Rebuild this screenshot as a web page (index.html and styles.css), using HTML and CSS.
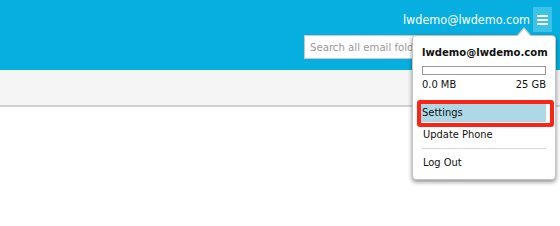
FILE: index.html
```html
<!DOCTYPE html>
<html>
<head>
<meta charset="utf-8">
<link rel="stylesheet" href="styles.css">
</head>
<body>
<header class="topbar">
  <div class="user-row">
    <span class="user-email">lwdemo@lwdemo.com</span>
    <button class="menu-btn" aria-label="Menu">
      <svg width="11" height="10" viewBox="0 0 11 10"><rect x="0" y="0" width="11" height="2" fill="#fff"/><rect x="0" y="4" width="11" height="2" fill="#fff"/><rect x="0" y="8" width="11" height="2" fill="#fff"/></svg>
    </button>
  </div>
  <div class="search-row">
    <input class="search" type="text" placeholder="Search all email folders">
  </div>
</header>
<div class="toolbar"></div>

<div class="dropdown">
  <div class="dd-email">lwdemo@lwdemo.com</div>
  <div class="quota-bar"></div>
  <div class="quota-labels"><span>0.0 MB</span><span>25 GB</span></div>
  <div class="dd-item active">Settings</div>
  <div class="dd-item">Update Phone</div>
  <div class="dd-sep"></div>
  <div class="dd-item">Log Out</div>
</div>
<div class="annotation"></div>
</body>
</html>
```
FILE: styles.css
```css
html, body {
  margin: 0;
  padding: 0;
  background: #fff;
}
body {
  width: 560px;
  height: 226px;
  overflow: hidden;
  position: relative;
  font-family: "DejaVu Sans Condensed", "DejaVu Sans", sans-serif;
  font-stretch: condensed;
}
.topbar {
  background: #06afdf;
  height: 71px;
  border-bottom: 1px solid #e6f6fb;
  box-sizing: border-box;
  padding-top: 7px;
}
.user-row {
  display: flex;
  justify-content: flex-end;
  align-items: center;
  padding-right: 8px;
  gap: 3px;
  height: 25px;
}
.user-email {
  color: #fff;
  font-size: 12.5px;
}
.menu-btn {
  width: 19px;
  height: 25px;
  border: 0;
  padding: 0;
  background: #3cc3e8;
  display: flex;
  align-items: center;
  justify-content: center;
}
.search-row {
  padding-top: 3px;
  padding-left: 304px;
}
.search {
  box-sizing: border-box;
  width: 236px;
  height: 24px;
  border: 1px solid #c8c8c8;
  padding: 0 5px;
  font-family: inherit;
  font-size: 11.3px;
  color: #333;
  outline: none;
}
.search::placeholder {
  color: #9a9a9a;
}
.toolbar {
  height: 34px;
  background: #f5f5f5;
  border-bottom: 2px solid #d2d2d2;
}
.dropdown {
  position: absolute;
  left: 412px;
  top: 35px;
  width: 144px;
  height: 145px;
  box-sizing: border-box;
  background: #fff;
  border: 1px solid #c4c4c4;
  border-radius: 4px;
  box-shadow: 0 2px 4px rgba(0,0,0,0.45);
  padding: 0 9px 0 9px;
  font-size: 11px;
  color: #111;
}
.dropdown::before {
  content: "";
  position: absolute;
  left: 103px;
  top: -9px;
  border-left: 8px solid transparent;
  border-right: 8px solid transparent;
  border-bottom: 9px solid #c4c4c4;
}
.dropdown::after {
  content: "";
  position: absolute;
  left: 104px;
  top: -7px;
  border-left: 7px solid transparent;
  border-right: 7px solid transparent;
  border-bottom: 8px solid #fff;
}
.dd-email {
  font-weight: bold;
  font-size: 11.2px;
  margin-top: 9px;
  line-height: 15px;
}
.quota-bar {
  margin-top: 6px;
  height: 9px;
  box-sizing: border-box;
  border: 1px solid #999;
  background: #fff;
}
.quota-labels {
  display: flex;
  justify-content: space-between;
  margin-top: 3px;
  line-height: 14px;
}
.dd-item {
  line-height: 19px;
  padding-left: 1px;
}
.dd-item.active {
  background: #add8e6;
  margin-top: 11px;
  margin-left: -1px;
  padding-top: 1px;
  line-height: 18px;
}
.dd-item.active + .dd-item {
  margin-top: 3px;
}
.dd-sep {
  height: 1px;
  background: #d8d8d8;
  margin: 4px 0 4px;
}
.annotation {
  position: absolute;
  left: 417px;
  top: 100px;
  width: 137px;
  height: 27px;
  box-sizing: border-box;
  border: 4px solid #fb2415;
  border-radius: 3px;
}
```
